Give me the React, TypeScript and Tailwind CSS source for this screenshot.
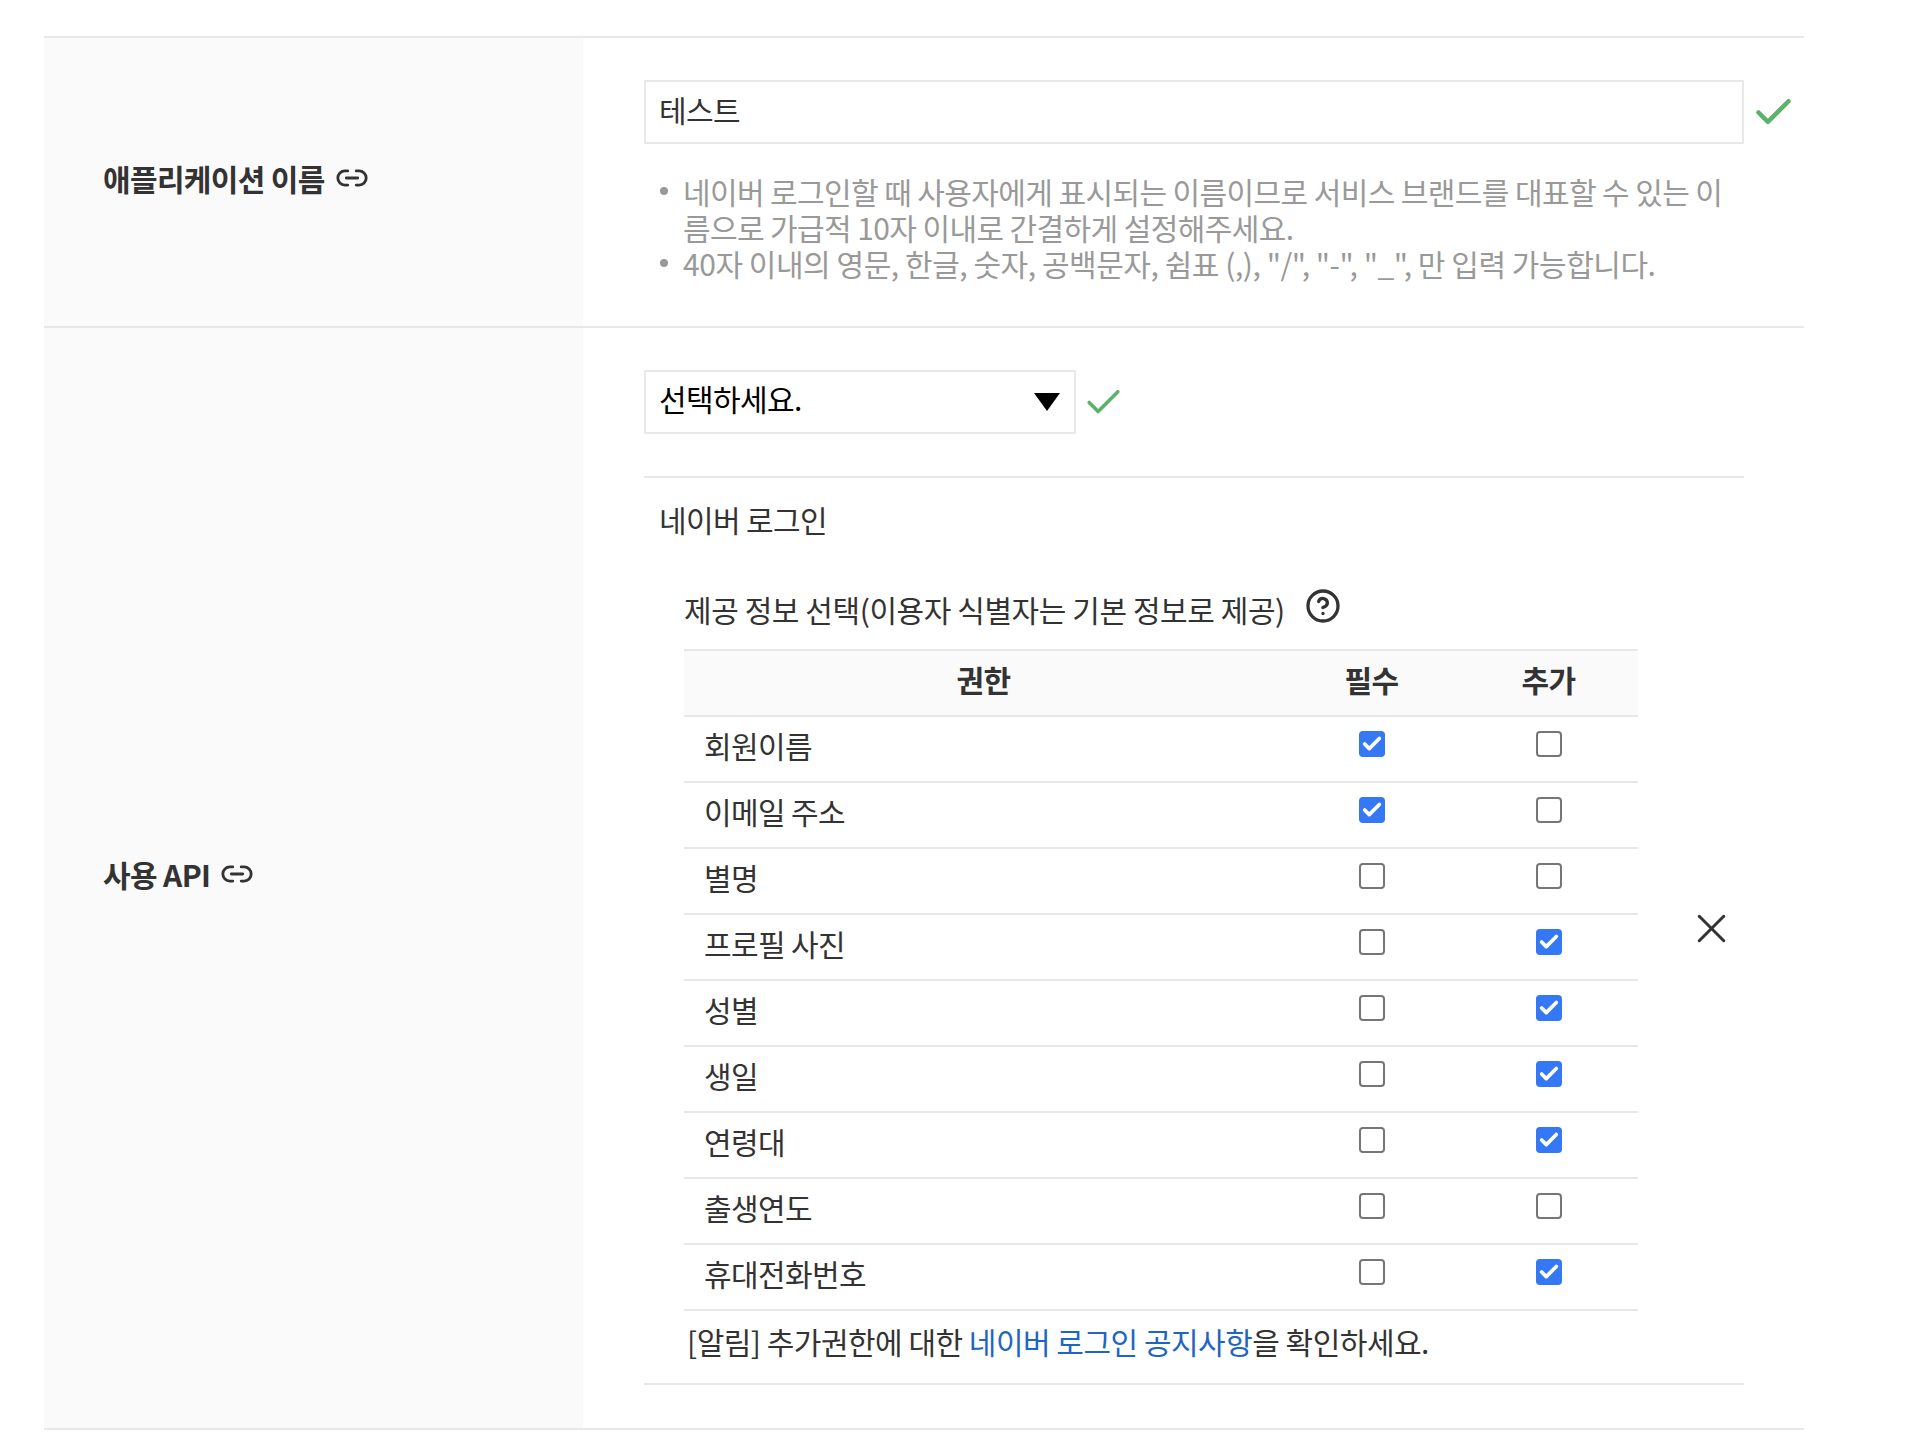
import { Link2, CircleHelp, X, Check } from "lucide-react";

const PERMISSIONS = [
  { name: "회원이름", required: true, extra: false },
  { name: "이메일 주소", required: true, extra: false },
  { name: "별명", required: false, extra: false },
  { name: "프로필 사진", required: false, extra: true },
  { name: "성별", required: false, extra: true },
  { name: "생일", required: false, extra: true },
  { name: "연령대", required: false, extra: true },
  { name: "출생연도", required: false, extra: false },
  { name: "휴대전화번호", required: false, extra: true },
];

function Tick({ checked }: { checked: boolean }) {
  return checked ? (
    <div className="w-[26px] h-[26px] rounded-[4px] bg-[#3478f6] flex items-center justify-center">
      <Check className="w-[22px] h-[22px] text-white" strokeWidth={4} />
    </div>
  ) : (
    <div className="w-[26px] h-[26px] rounded-[4px] border-2 border-[#767676] bg-white" />
  );
}

function RowLabel({ label }: { label: string }) {
  return (
    <div className="w-[539px] shrink-0 bg-[#fafafa] flex items-center pl-[59px] pb-[8px] gap-[10px]">
      <span className="text-[30px] font-bold text-[#333] tracking-[-0.65px]">{label}</span>
      <Link2 className="w-[34px] h-[34px] text-[#333]" strokeWidth={2} />
    </div>
  );
}

function App() {
  return (
    <div className="bg-white w-[1922px] h-[1432px] pt-[36px] pl-[44px] overflow-hidden font-['Noto_Sans_CJK_KR',sans-serif] text-[#333] tracking-[-0.6px]">
      <div className="w-[1760px] border-t-2 border-[#e8e8e8] flex h-[290px]">
        <RowLabel label="애플리케이션 이름" />
        <div className="pl-[61px] pt-[42px]">
          <div className="flex items-center gap-[7px] w-[1160px]">
            <div className="w-[1100px] h-[64px] border-2 border-[#e8e8e8] flex items-center pl-[13px] text-[30px]">
              <span className="pb-[6px]">테스트</span>
            </div>
            <Check className="w-[45px] h-[45px] text-[#5cb268]" strokeWidth={2.4} />
          </div>
          <ul className="mt-[29px] w-[1082px] pl-[16px] text-[30px] leading-[36px] text-[#999]">
            <li className="flex gap-[15px]">
              <span className="w-[8px] h-[8px] mt-[14px] shrink-0 rounded-full bg-[#999]" />
              <span>네이버 로그인할 때 사용자에게 표시되는 이름이므로 서비스 브랜드를 대표할 수 있는 이름으로 가급적 10자 이내로 간결하게 설정해주세요.</span>
            </li>
            <li className="flex gap-[15px] tracking-[-0.45px]">
              <span className="w-[8px] h-[8px] mt-[14px] shrink-0 rounded-full bg-[#999]" />
              <span>40자 이내의 영문, 한글, 숫자, 공백문자, 쉼표 (,), "/", "-", "_", 만 입력 가능합니다.</span>
            </li>
          </ul>
        </div>
      </div>

      <div className="w-[1760px] border-t-2 border-b-2 border-[#e8e8e8] flex h-[1104px]">
        <RowLabel label="사용 API" />
        <div className="pl-[61px] pt-[42px]">
          <div className="flex items-center gap-[6px]">
            <div className="w-[432px] h-[64px] border-2 border-[#e8e8e8] flex items-center justify-between pl-[13px] pr-[14px] text-[30px] text-black">
              <span className="pb-[8px]">선택하세요.</span>
              <div className="w-0 h-0 border-l-[13px] border-r-[13px] border-t-[18px] border-l-transparent border-r-transparent border-t-black" />
            </div>
            <Check className="w-[43px] h-[43px] text-[#5cb268]" strokeWidth={2} />
          </div>

          <div className="mt-[42px] w-[1100px] border-t-2 border-b-2 border-[#e8e8e8] flex items-center h-[909px]">
            <div className="w-[994px] pl-[15px] h-full">
              <div className="pt-[19px] text-[30px]">네이버 로그인</div>
              <div className="flex items-start mt-[45px] ml-[25px] gap-[20px] text-[30px] tracking-[-0.42px]">
                <span>제공 정보 선택(이용자 식별자는 기본 정보로 제공)</span>
                <CircleHelp className="w-[36px] h-[36px] mt-[1px]" strokeWidth={2.2} />
              </div>
              <div className="ml-[25px] mt-[17px] w-[954px] border-t-2 border-[#e8e8e8]">
                <div className="flex h-[66px] items-center bg-[#fafafa] border-b-2 border-[#e8e8e8] font-bold text-[30px] pb-[8px]">
                  <div className="w-[599px] text-center">권한</div>
                  <div className="w-[177px] text-center">필수</div>
                  <div className="w-[177px] text-center">추가</div>
                </div>
                {PERMISSIONS.map((p) => (
                  <div key={p.name} className="flex h-[66px] items-center border-b-2 border-[#e8e8e8] text-[30px]">
                    <div className="w-[599px] pl-[20px] pb-[8px]">{p.name}</div>
                    <div className="w-[177px] flex justify-center pb-[10px]">
                      <Tick checked={p.required} />
                    </div>
                    <div className="w-[177px] flex justify-center pb-[10px]">
                      <Tick checked={p.extra} />
                    </div>
                  </div>
                ))}
              </div>
              <div className="ml-[28px] pt-[8px] text-[30px] tracking-[-0.5px]">
                [알림] 추가권한에 대한 <span className="text-[#1f66c1]">네이버 로그인 공지사항</span>을 확인하세요.
              </div>
            </div>
            <X className="w-[49px] h-[49px] ml-[49px] mb-[5px] text-[#333]" strokeWidth={1.5} />
          </div>
        </div>
      </div>
    </div>
  );
}

export default App;
